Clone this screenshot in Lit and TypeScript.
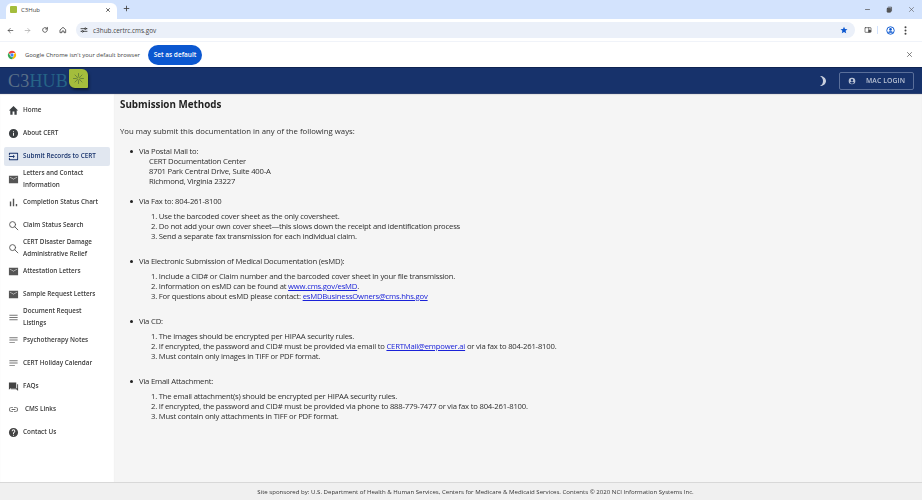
import { LitElement, html, css, svg } from "lit";
import { customElement } from "lit/decorators.js";

const ic = (p: unknown, color = "#3c4043", size = 11, vb = "0 0 24 24") =>
  html`<svg width=${size} height=${size} viewBox=${vb} fill=${color}>${p}</svg>`;
const st = (p: unknown, color = "#444", w = 2, size = 11) =>
  html`<svg width=${size} height=${size} viewBox="0 0 24 24" fill="none" stroke=${color} stroke-width=${w} stroke-linecap="round" stroke-linejoin="round">${p}</svg>`;

const P = {
  home: svg`<path d="M10 21v-7h4v7h5v-9h3L12 2 2 12h3v9z"/>`,
  info: svg`<path fill-rule="evenodd" d="M12 2a10 10 0 1 0 0 20 10 10 0 0 0 0-20zm1 15h-2v-6h2zm0-8h-2V7h2z"/>`,
  submit: svg`<path d="M3 4h18a1 1 0 0 1 1 1v14a1 1 0 0 1-1 1H3a1 1 0 0 1-1-1v-4h2v3h16V6H4v3H2V5a1 1 0 0 1 1-1zm8 4 4 4-4 4v-3H2v-2h9z"/>`,
  mail: svg`<path fill-rule="evenodd" d="M2 4h20v16H2zm2 3 8 5 8-5v-1l-8 5-8-5z"/>`,
  chart: svg`<path d="M4 10h3v10H4zM10.500 4h3v16h-3zM17 15h3v5h-3z"/>`,
  search: svg`<circle cx="10" cy="10" r="6.500"/><path d="m15 15 6.500 6.500"/>`,
  list: svg`<path d="M3 6h18v2H3zM3 11h18v2H3zM3 16h18v2H3z"/>`,
  notes: svg`<path d="M3 5h18v2H3zM3 10h18v2H3zM3 15h12v2H3z"/>`,
  faq: svg`<path d="M2 3h16v12H6l-4 4zM20 7h2v15l-4-4H6v-2h14z"/>`,
  link: svg`<path d="M3.900 12A3.100 3.100 0 0 1 7 8.900h4V7H7a5 5 0 0 0 0 10h4v-1.900H7A3.100 3.100 0 0 1 3.900 12zM8 13h8v-2H8zm9-6h-4v1.900h4a3.100 3.100 0 0 1 0 6.200h-4V17h4a5 5 0 0 0 0-10z"/>`,
  help: svg`<path fill-rule="evenodd" d="M12 2a10 10 0 1 0 0 20 10 10 0 0 0 0-20zm1 17h-2v-2h2zm2-7.700-.9.900c-.7.700-1.100 1.300-1.100 2.800h-2v-.5c0-1.100.4-2.100 1.100-2.800l1.200-1.300c.4-.3.700-.8.700-1.400a2 2 0 0 0-4 0H8a4 4 0 0 1 8 0c0 .9-.4 1.700-1 2.300z"/>`,
};

type Nav = { icon: unknown; lines: string[]; active?: boolean; wide?: boolean };
const NAV: Nav[] = [
  { icon: ic(P.home), lines: ["Home"] },
  { icon: ic(P.info), lines: ["About CERT"] },
  { icon: ic(P.submit, "#17326b"), lines: ["Submit Records to CERT"], active: true },
  { icon: ic(P.mail, "#555"), lines: ["Letters and Contact", "Information"] },
  { icon: ic(P.chart, "#555"), lines: ["Completion Status Chart"] },
  { icon: st(P.search, "#555"), lines: ["Claim Status Search"] },
  { icon: st(P.search, "#555"), lines: ["CERT Disaster Damage", "Administrative Relief"] },
  { icon: ic(P.mail, "#555"), lines: ["Attestation Letters"] },
  { icon: ic(P.mail, "#555"), lines: ["Sample Request Letters"] },
  { icon: ic(P.list, "#777"), lines: ["Document Request", "Listings"] },
  { icon: ic(P.notes, "#777"), lines: ["Psychotherapy Notes"] },
  { icon: ic(P.notes, "#777"), lines: ["CERT Holiday Calendar"] },
  { icon: ic(P.faq, "#444"), lines: ["FAQs"] },
  { icon: ic(P.link, "#666"), lines: ["CMS Links"], wide: true },
  { icon: ic(P.help, "#444"), lines: ["Contact Us"] },
];

@customElement("app-root")
export class AppRoot extends LitElement {
  static styles = css`
    :host { display: block; width: 922px; height: 500px; overflow: hidden; font-family: "Open Sans", "Noto Sans", sans-serif; color: #333; background: #fff; }
    .page { display: flex; flex-direction: column; height: 500px; filter: blur(0.3px); }
    svg { display: block; flex: none; }

    .tabs { height: 19px; background: #d3e3fd; display: flex; align-items: flex-end; padding-left: 6px; flex: none; }
    .tab { width: 111px; height: 16px; background: #fff; border-radius: 6px 6px 0 0; display: flex; align-items: center; padding: 0 6px 3px 4px; box-sizing: border-box; font-size: 6px; color: #444; }
    .fav { width: 7px; height: 7px; background: #a4bd3c; border-radius: 1px; margin-right: 4px; }
    .tab .t { flex: 1; }
    .plus { margin: 0 0 3px 6px; align-self: center; }
    .spacer { flex: 1; }
    .win { display: flex; gap: 15px; align-self: center; padding-right: 7px; align-items: center; }

    .toolbar { height: 22px; background: #fff; display: flex; align-items: center; flex: none; padding: 0 8px 0 7px; box-sizing: border-box; }
    .navbtns { display: flex; gap: 10px; margin-right: 9px; align-items: center; }
    .omni { width: 779px; height: 16px; background: #ebf0f9; border-radius: 8px; display: flex; align-items: center; padding: 0 7px 0 4px; box-sizing: border-box; font-size: 6.400px; color: #444; }
    .omni .tune { margin-right: 5px; }
    .omni .u { flex: 1; }
    .tools { display: flex; align-items: center; margin-left: 9px; }
    .sep { width: 1px; height: 8px; background: #d3e3fd; margin: 0 8px 0 5px; }

    .infobar { height: 26px; background: #fff; border-top: 1px solid #f0f3f9; box-sizing: border-box; display: flex; align-items: center; padding: 0 9px 0 7px; flex: none; font-size: 5.900px; color: #444; }
    .infobar .msg { margin-left: 8px; margin-right: 8px; width: 115px; white-space: nowrap; }
    .setdef { width: 54px; height: 20px; border-radius: 10px; background: #0b57d0; color: #fff; font-size: 6.500px; font-weight: 600; display: flex; align-items: center; justify-content: center; }

    .appbar { height: 27px; background: #17326b; border-top: 1px solid #0f2452; border-bottom: 1px solid #2a3f70; box-sizing: border-box; display: flex; align-items: center; padding: 0 8px; flex: none; }
    .logo { display: flex; align-items: center; }
    .logo .c3, .logo .hub { font-family: "Liberation Serif", serif; font-size: 18px; line-height: 20px; letter-spacing: 0.200px; }
    .logo .c3 { color: #5a7089; }
    .logo .hub { color: #266487; }
    .leaf { width: 19px; height: 19px; background: #a4bd3c; border-radius: 1px 6px 1px 6px; box-shadow: 1px 2px 3px rgba(0,0,0,.5); margin: -4px 0 0 1px; display: flex; align-items: center; justify-content: center; }
    .moon { margin-right: 12px; }
    .login { width: 75px; height: 18px; border: 1px solid #5a6f9a; border-radius: 2px; box-sizing: border-box; display: flex; align-items: center; padding-left: 8px; color: #b9c2d4; font-size: 6.800px; font-weight: 600; letter-spacing: 0.100px; }
    .login span { margin-left: 10px; }

    .body { flex: 1; display: flex; min-height: 0; }
    .side { width: 114px; background: #fff; flex: none; padding: 4.500px 4px 0 4px; box-sizing: border-box; box-shadow: inset 0 1px 1px rgba(0,0,0,.08); }
    .item { height: 23px; display: flex; align-items: center; font-size: 6.350px; line-height: 12px; color: #3a3a3a; font-weight: 600; }
    .item .ico { width: 19px; padding-left: 4px; box-sizing: border-box; flex: none; }
    .item .txt { white-space: nowrap; }
    .item.wide .txt { margin-left: 2px; }
    .item.active { color: #17326b; position: relative; }
    .item.active::before { content: ""; position: absolute; left: 0; top: 2px; width: 106px; height: 19px; background: #e1e7f0; border-radius: 2px; }
    .item.active > * { position: relative; }

    .main { flex: 1; background: #f5f5f5; padding: 4px 0 0 6px; box-sizing: border-box; font-size: 7.700px; letter-spacing: -0.200px; line-height: 10px; color: #2e2e2e; box-shadow: inset 0 1px 1px rgba(0,0,0,.08); }
    h1 { margin: 0 0 15px; font-size: 9.800px; line-height: 13px; font-weight: 700; color: #222; letter-spacing: 0; }
    p { margin: 0 0 10px; font-size: 7.770px; letter-spacing: 0; }
    ul { list-style: none; margin: 0; padding: 0; }
    .m { position: relative; padding-left: 19px; }
    .m::before { content: ""; position: absolute; left: 10px; top: 3.500px; width: 3px; height: 3px; border-radius: 50%; background: #222; }
    .addr { padding-left: 10px; margin-bottom: 10px; }
    ol { list-style: none; margin: 5px 0 15px; padding: 0 0 0 12px; }
    ol.last { margin-bottom: 0; }
    a { color: #1a22d8; text-decoration: underline; }

    .foot { height: 18px; background: #f0f0f0; border-top: 1px solid #d8d8d8; box-sizing: border-box; flex: none; display: flex; align-items: center; justify-content: center; font-size: 6.090px; color: #333; padding-left: 29px; }
  `;

  render() {
    return html`<div class="page">
      <div class="tabs">
        <div class="tab"><div class="fav"></div><div class="t">C3Hub</div>
          ${st(svg`<path d="M6 6l12 12M18 6 6 18"/>`, "#333", 3, 6)}</div>
        <div class="plus">${st(svg`<path d="M12 4v16M4 12h16"/>`, "#444", 3, 7)}</div>
        <div class="spacer"></div>
        <div class="win">
          ${st(svg`<path d="M5 12h14"/>`, "#555", 2.500, 7)}
          ${st(svg`<rect x="4" y="8" width="12" height="13" rx="1" fill="#555"/><path d="M8 4h11v13"/>`, "#444", 2.500, 7)}
          ${st(svg`<path d="M5 5l14 14M19 5 5 19"/>`, "#555", 2, 7)}
        </div>
      </div>
      <div class="toolbar">
        <div class="navbtns">
          ${st(svg`<path d="M20 12H4M11 5l-7 7 7 7"/>`, "#444", 2.500, 7)}
          ${st(svg`<path d="M4 12h16M13 5l7 7-7 7"/>`, "#aaa", 2.500, 7)}
          ${st(svg`<path d="M19 12a7 7 0 1 1-2-5l2 2M19 4v5h-5"/>`, "#444", 2.500, 8)}
          ${st(svg`<path d="M4 11l8-7 8 7v9h-5v-5H9v5H4z"/>`, "#444", 2.500, 8)}
        </div>
        <div class="omni">
          <div class="tune">${st(svg`<path d="M3 8h10M19 8h2M3 16h2M11 16h10"/><circle cx="16" cy="8" r="2.500"/><circle cx="8" cy="16" r="2.500"/>`, "#333", 2.500, 8)}</div>
          <div class="u">c3hub.certrc.cms.gov</div>
          ${ic(svg`<path d="m12 2 3 7 7.500.6-5.700 4.900 1.800 7.500L12 18l-6.600 4 1.800-7.500L1.500 9.600 9 9z"/>`, "#0b57d0", 8)}
        </div>
        <div class="tools">
          ${st(svg`<rect x="3" y="5" width="18" height="14" rx="1"/><path d="M14 5v14" /><circle cx="17" cy="15" r="3" fill="#444"/>`, "#444", 2, 8)}
          <div class="sep"></div>
          <svg width="9" height="9" viewBox="0 0 24 24"><circle cx="12" cy="12" r="10" fill="none" stroke="#0b57d0" stroke-width="2.500"/><circle cx="12" cy="9" r="3.500" fill="#0b57d0"/><path d="M5 18c2-5 12-5 14 0z" fill="#0b57d0"/></svg>
          <svg style="margin-left:9px" width="3" height="9" viewBox="0 0 3 9" fill="#444"><circle cx="1.500" cy="1.200" r="1"/><circle cx="1.500" cy="4.500" r="1"/><circle cx="1.500" cy="7.800" r="1"/></svg>
        </div>
      </div>
      <div class="infobar">
        <svg width="10" height="10" viewBox="0 0 24 24">
          <path d="M12 2a10 10 0 0 1 8.660 5H12a5 5 0 0 0-4.700 3.300L3.600 6.600A10 10 0 0 1 12 2z" fill="#ea4335"/>
          <path d="M20.660 7A10 10 0 0 1 12 22l3.900-6.800A5 5 0 0 0 16.500 9.800z" fill="#fbbc04"/>
          <path d="M12 22A10 10 0 0 1 3.600 6.600l4.500 7.800A5 5 0 0 0 15.900 15.200z" fill="#34a853"/>
          <circle cx="12" cy="12" r="4" fill="#4285f4"/>
        </svg>
        <div class="msg">Google Chrome isn't your default browser</div>
        <div class="setdef">Set as default</div>
        <div class="spacer"></div>
        ${st(svg`<path d="M5 5l14 14M19 5 5 19"/>`, "#555", 2.500, 7)}
      </div>
      <div class="appbar">
        <div class="logo">
          <span class="c3">C3</span><span class="hub">HUB</span>
          <div class="leaf">
            <svg width="13" height="13" viewBox="0 0 24 24" fill="none" stroke="#5f7a3a" stroke-width="1.500"><circle cx="12" cy="12" r="3"/><path d="M12 2v6M12 16v6M2 12h6M16 12h6M5 5l4 4M15 15l4 4M19 5l-4 4M9 15l-4 4"/></svg>
          </div>
        </div>
        <div class="spacer"></div>
        <div class="moon"><svg width="8" height="10" viewBox="0 0 8 10" fill="#c9d0de"><path d="M1 0c3 0 6 2 6 5s-3 5-6 5c2-1 3-3 3-5S3 1 1 0z"/></svg></div>
        <div class="login">
          <svg width="8" height="8" viewBox="0 0 24 24" fill="#b9c2d4"><path fill-rule="evenodd" d="M12 2a10 10 0 1 0 0 20 10 10 0 0 0 0-20zm0 4a3.500 3.500 0 1 1 0 7 3.500 3.500 0 0 1 0-7zm0 14a8 8 0 0 1-6-3c1-2 4-3 6-3s5 1 6 3a8 8 0 0 1-6 3z"/></svg>
          <span>MAC LOGIN</span>
        </div>
      </div>
      <div class="body">
        <nav class="side">
          ${NAV.map(
            (n) => html`<div class="item ${n.active ? "active" : ""} ${n.wide ? "wide" : ""}">
              <div class="ico">${n.icon}</div>
              <div class="txt">${n.lines.map((l) => html`<div>${l}</div>`)}</div>
            </div>`
          )}
        </nav>
        <main class="main">
          <h1>Submission Methods</h1>
          <p>You may submit this documentation in any of the following ways:</p>
          <ul>
            <li class="m">Via Postal Mail to:
              <div class="addr">CERT Documentation Center<br />8701 Park Central Drive, Suite 400-A<br />Richmond, Virginia 23227</div>
            </li>
            <li class="m">Via Fax to: 804-261-8100
              <ol>
                <li>1. Use the barcoded cover sheet as the only coversheet.</li>
                <li>2. Do not add your own cover sheet—this slows down the receipt and identification process</li>
                <li>3. Send a separate fax transmission for each individual claim.</li>
              </ol>
            </li>
            <li class="m">Via Electronic Submission of Medical Documentation (esMD):
              <ol>
                <li>1. Include a CID# or Claim number and the barcoded cover sheet in your file transmission.</li>
                <li>2. Information on esMD can be found at <a>www.cms.gov/esMD</a>.</li>
                <li>3. For questions about esMD please contact: <a>esMDBusinessOwners@cms.hhs.gov</a></li>
              </ol>
            </li>
            <li class="m">Via CD:
              <ol>
                <li>1. The images should be encrypted per HIPAA security rules.</li>
                <li>2. If encrypted, the password and CID# must be provided via email to <a>CERTMail@empower.ai</a> or via fax to 804-261-8100.</li>
                <li>3. Must contain only images in TIFF or PDF format.</li>
              </ol>
            </li>
            <li class="m">Via Email Attachment:
              <ol class="last">
                <li>1. The email attachment(s) should be encrypted per HIPAA security rules.</li>
                <li>2. If encrypted, the password and CID# must be provided via phone to 888-779-7477 or via fax to 804-261-8100.</li>
                <li>3. Must contain only attachments in TIFF or PDF format.</li>
              </ol>
            </li>
          </ul>
        </main>
      </div>
      <div class="foot">Site sponsored by: U.S. Department of Health &amp; Human Services, Centers for Medicare &amp; Medicaid Services. Contents © 2020 NCI Information Systems Inc.</div>
    </div>`;
  }
}
